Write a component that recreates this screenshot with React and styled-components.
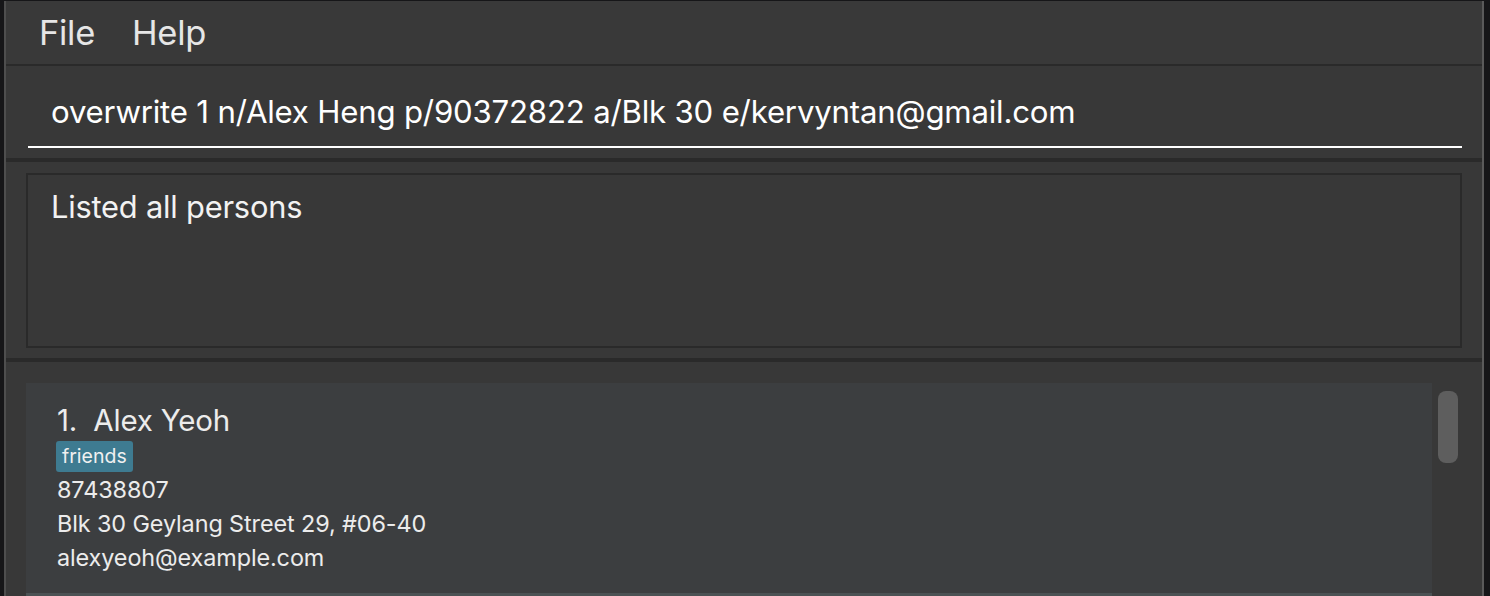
import React from "react";
import styled, { createGlobalStyle } from "styled-components";

const Global = createGlobalStyle`
  html, body { margin: 0; padding: 0; background: #161618; }
  body { font-family: Inter, "Open Sans", sans-serif; overflow: hidden; }
  * { box-sizing: border-box; }
`;

const Desktop = styled.div`
  width: 1490px;
  height: 596px;
  display: flex;
  padding: 1px 6px 0 4px;
  background: #161618;
`;

const Window = styled.div`
  flex: 1;
  display: flex;
  flex-direction: column;
  background: #383838;
  border-left: 2px solid #4e4e4e;
  border-right: 2px solid #5a5a5a;
  overflow: hidden;
`;

const MenuBar = styled.div`
  flex: none;
  height: 63px;
  display: flex;
  align-items: center;
  gap: 37px;
  padding-left: 33px;
  padding-top: 1px;
  background: #393939;
`;

const MenuItem = styled.span`
  color: #e6e6e6;
  font-size: 34.5px;
  letter-spacing: -0.3px;
  line-height: 1;
`;

const Divider = styled.div`
  height: ${(p) => p.$h}px;
  background: #2a2a2a;
  flex: none;
`;

const CommandArea = styled.div`
  flex: none;
  height: 92px;
  padding: 0 20px 10px 22px;
  display: flex;
  align-items: flex-end;
`;

const CommandInput = styled.div`
  width: 100%;
  height: 82px;
  border-bottom: 2px solid #ffffff;
  display: flex;
  align-items: center;
  padding-left: 23px;
  padding-top: 12px;
  color: #ffffff;
  font-size: 31.2px;
  letter-spacing: -0.2px;
  white-space: nowrap;
`;

const ResultArea = styled.div`
  flex: none;
  height: 196px;
  padding: 11px 20px 11px 20px;
`;

const ResultBox = styled.div`
  height: 175px;
  border: 2px solid #2a2a2a;
  padding: 13px 0 0 23px;
  color: #f2f2f2;
  font-size: 30.8px;
  letter-spacing: -0.2px;
`;

const ListArea = styled.div`
  flex: 1;
  display: flex;
  padding: 21px 0 0 20px;
  gap: 6px;
`;

const Cards = styled.div`
  width: 1406px;
  display: flex;
  flex-direction: column;
`;

const Card = styled.div`
  flex: none;
  height: ${(p) => p.$h}px;
  background: ${(p) => (p.$alt ? "#4b5254" : "#3c3e40")};
  padding: 19px 0 0 31px;
  display: flex;
  flex-direction: column;
  align-items: flex-start;
  color: #ececec;
`;

const Name = styled.div`
  font-size: 29.5px;
  line-height: 36px;
  letter-spacing: -0.2px;
  white-space: pre;
`;

const Tags = styled.div`
  display: flex;
  gap: 6px;
  margin: 3px 0 1px -1px;
`;

const Tag = styled.span`
  background: #3e7b91;
  color: #f0f0f0;
  font-size: 19.5px;
  line-height: 31px;
  padding: 0 6px;
  border-radius: 3px;
`;

const Field = styled.div`
  font-size: 23.4px;
  line-height: 34px;
  letter-spacing: -0.1px;
`;

const ScrollTrack = styled.div`
  width: 20px;
  padding-top: 8px;
`;

const Thumb = styled.div`
  height: 72px;
  border-radius: 8px;
  background: #5e5e5e;
`;

export default function App() {
  return (
    <>
      <Global />
      <Desktop>
        <Window>
          <MenuBar>
            <MenuItem>File</MenuItem>
            <MenuItem>Help</MenuItem>
          </MenuBar>
          <Divider $h={2} />
          <CommandArea>
            <CommandInput>overwrite 1 n/Alex Heng p/90372822 a/Blk 30 e/kervyntan@gmail.com</CommandInput>
          </CommandArea>
          <Divider $h={4} />
          <ResultArea>
            <ResultBox>Listed all persons</ResultBox>
          </ResultArea>
          <Divider $h={4} />
          <ListArea>
            <Cards>
              <Card $h={210}>
                <Name>{"1.  Alex Yeoh"}</Name>
                <Tags>
                  <Tag>friends</Tag>
                </Tags>
                <Field>87438807</Field>
                <Field>Blk 30 Geylang Street 29, #06-40</Field>
                <Field>alexyeoh@example.com</Field>
              </Card>
              <Card $h={210} $alt />
            </Cards>
            <ScrollTrack>
              <Thumb />
            </ScrollTrack>
          </ListArea>
        </Window>
      </Desktop>
    </>
  );
}
